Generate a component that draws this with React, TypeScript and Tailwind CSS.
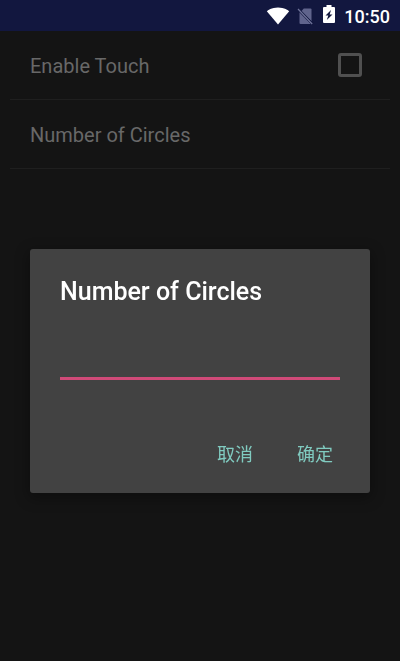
import { useState } from 'react'

function WifiIcon() {
  return (
    <svg width="24" height="20" viewBox="0 0 24 20" fill="#ffffff" aria-hidden="true">
      <path d="M12 18.600 23.200 5.300C22.400 4.500 18.300 1.500 12 1.500S1.600 4.500.8 5.300L12 18.600z" />
    </svg>
  )
}

function NoSimIcon() {
  return (
    <svg width="18" height="20" viewBox="0 0 18 20" aria-hidden="true">
      <path d="M7.800 2.500H14.500a1 1 0 0 1 1 1V15.200L5.500 5z" fill="#60648c" />
      <path d="M3.500 6.200 14.800 17.800a1 1 0 0 1-.6.200H4.500a1 1 0 0 1-1-1z" fill="#60648c" />
      <path d="M3 4 16.500 18" stroke="#12173f" strokeWidth="2.400" />
      <path d="M2 3 16.200 18" stroke="#70749a" strokeWidth="1.200" />
    </svg>
  )
}

function BatteryIcon() {
  return (
    <svg width="12" height="20" viewBox="0 0 12 20" aria-hidden="true">
      <path d="M11 3H8.500V1h-5v2H1a1 1 0 0 0-1 1v14a1 1 0 0 0 1 1h10a1 1 0 0 0 1-1V4a1 1 0 0 0-1-1z" fill="#ffffff" />
      <path d="M8 6 2.500 11.600h2.800L3.800 16 9.500 10.400H6.700z" fill="#12173d" />
    </svg>
  )
}

export default function App() {
  const [touchEnabled, setTouchEnabled] = useState(false)
  const [open, setOpen] = useState(true)
  const [count, setCount] = useState('')

  return (
    <div className="min-h-screen bg-[#141414] font-['Roboto','Noto_Sans_CJK_SC',sans-serif]">
      {/* Status bar */}
      <header className="flex h-[31px] items-center justify-end bg-[#12173f] pr-[10px] text-white">
        <WifiIcon />
        <div className="ml-[6px]">
          <NoSimIcon />
        </div>
        <div className="ml-[9px] pb-[3px]">
          <BatteryIcon />
        </div>
        <span className="ml-[9px] pt-[2px] text-[18px] leading-6 font-medium">10:50</span>
      </header>

      {/* Preferences */}
      <main className="px-[10px] text-[20px] text-[#686868]">
        <label className="flex h-[69px] items-center justify-between border-b border-[#1f1f1f] pr-7 pl-5">
          <span className="pt-[2px]">Enable Touch</span>
          <input
            type="checkbox"
            checked={touchEnabled}
            onChange={(e) => setTouchEnabled(e.target.checked)}
            className="size-6 appearance-none rounded-[3px] border-3 border-[#505050] checked:bg-[#505050]"
          />
        </label>
        <button
          type="button"
          onClick={() => setOpen(true)}
          className="flex h-[69px] w-full items-center border-b border-[#1f1f1f] px-5 pt-[2px]"
        >
          Number of Circles
        </button>
      </main>

      {/* Dialog */}
      {open && (
        <div className="fixed inset-0 flex items-center justify-center px-[30px] pt-[81px]">
          <form
            role="dialog"
            aria-labelledby="circles-title"
            onSubmit={(e) => {
              e.preventDefault()
              setOpen(false)
            }}
            className="w-full rounded-[3px] bg-[#424242] px-[30px] pt-[27px] pb-[19px] shadow-[0_4px_14px_2px_rgba(0,0,0,0.3)]"
          >
            <label id="circles-title" htmlFor="circles" className="block text-[25px] leading-8 font-medium text-white">
              Number of Circles
            </label>
            <input
              id="circles"
              type="text"
              inputMode="numeric"
              value={count}
              onChange={(e) => setCount(e.target.value)}
              className="mt-[23px] block h-[49px] w-full border-b-3 border-[#d04a78] bg-transparent text-[22px] text-white outline-none"
            />
            <div className="-mr-[3px] mt-[54px] flex justify-end gap-6 text-[18px] text-[#80cbc0]">
              <button type="button" onClick={() => setOpen(false)} className="h-10 px-[10px]">
                取消
              </button>
              <button type="submit" className="h-10 px-[10px]">
                确定
              </button>
            </div>
          </form>
        </div>
      )}
    </div>
  )
}
